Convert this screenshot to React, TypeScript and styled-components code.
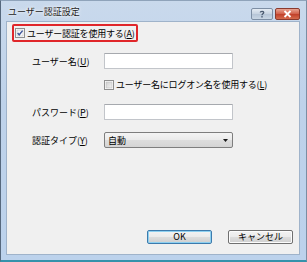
import React from 'react';
import styled, {createGlobalStyle} from "styled-components";

const GlobalStyle = createGlobalStyle`
    html, body {
      margin: 0;
      padding: 0;
      background: #ffffff;
    }
    body {
      font-family: "Noto Sans CJK JP", "Noto Sans", sans-serif;
      font-size: 9px;
      color: #000;
    }
    svg {
      flex-shrink: 0;
    }
`;

const Window = styled.div`
    width: 307px;
    height: 262px;
    box-sizing: border-box;
    display: flex;
    flex-direction: column;
    background: linear-gradient(180deg, #c9d9ec 0%, #bed2ea 40%, #bcd2ec 100%);
    border-left: 1px solid #56687d;
    border-right: 1px solid #7b8ea3;
    border-top: 1px solid #8fa3ba;
    border-bottom: 2px solid #3592ab;
    padding: 0 6px 5px 5px;
`;

const TitleBar = styled.div`
    height: 20px;
    display: flex;
    align-items: flex-start;
    justify-content: space-between;
`;

const Title = styled.div`
    padding: 5px 0 0 2px;
    font-size: 9px;
    line-height: 12px;
    color: #1a1a1a;
    text-shadow: 0 0 4px #ffffff, 0 0 2px #ffffff;
`;

const Caption = styled.div`
    display: flex;
    gap: 2px;
    margin-top: 7px;
`;

const CaptionButton = styled.div<{ $close?: boolean }>`
    width: ${p => (p.$close ? 25 : 22)}px;
    height: 12px;
    box-sizing: border-box;
    border: 1px solid ${p => (p.$close ? "#8a3a2e" : "#7d8ea4")};
    border-radius: 2px;
    display: flex;
    align-items: center;
    justify-content: center;
    background: ${p => (p.$close
        ? "linear-gradient(180deg, #e8a492 0%, #d2604a 48%, #c0402a 52%, #d56a4c 100%)"
        : "linear-gradient(180deg, #e4ebf3 0%, #c7d3e1 48%, #b6c5d7 52%, #c9d6e4 100%)")};
`;

const Client = styled.div`
    flex: 1;
    display: flex;
    flex-direction: column;
    background: #f0f0f0;
    border: 1px solid #9fb3ca;
    padding: 2px 6px 10px 5px;
`;

const Highlight = styled.div`
    width: 126px;
    height: 18px;
    box-sizing: border-box;
    border: 2px solid #e0262a;
    border-radius: 2px;
    display: flex;
    align-items: center;
    gap: 2px;
    padding-left: 1px;
    white-space: nowrap;
    letter-spacing: -0.2px;
`;

const Form = styled.div`
    display: grid;
    grid-template-columns: 72px 129px;
    margin: 11px 0 0 20px;
`;

const Label = styled.div<{ $top: number }>`
    margin-top: ${p => p.$top}px;
    height: 16px;
    display: flex;
    align-items: center;
    white-space: nowrap;
`;

const Field = styled.div<{ $top: number }>`
    margin-top: ${p => p.$top}px;
    height: 16px;
    box-sizing: border-box;
    background: #ffffff;
    border: 1px solid #c2c5ca;
    border-top-color: #a6a9ae;
    border-radius: 1px;
`;

const CheckRow = styled.div<{ $top: number }>`
    grid-column: 2 / span 1;
    margin-top: ${p => p.$top}px;
    height: 11px;
    display: flex;
    align-items: center;
    gap: 2px;
    white-space: nowrap;
    letter-spacing: -0.2px;
`;

const Select = styled.div<{ $top: number }>`
    margin-top: ${p => p.$top}px;
    height: 16px;
    box-sizing: border-box;
    border: 1px solid #7e7e7e;
    border-radius: 2px;
    background: linear-gradient(180deg, #f4f4f4 0%, #ebebeb 48%, #dddddd 52%, #d4d4d4 100%);
    display: flex;
    align-items: center;
    justify-content: space-between;
    padding: 0 4px 0 3px;
`;

const Footer = styled.div`
    margin-top: auto;
    display: flex;
    justify-content: flex-end;
    gap: 16px;
`;

const Button = styled.div<{ $default?: boolean }>`
    width: 65px;
    height: 14px;
    box-sizing: border-box;
    border: 1px solid ${p => (p.$default ? "#3d7bad" : "#707070")};
    border-radius: 2px;
    background: linear-gradient(180deg, #f3f3f3 0%, #ebebeb 48%, #dddddd 52%, #cfcfcf 100%);
    box-shadow: ${p => (p.$default ? "inset 0 0 0 1px #8ed0f0" : "inset 0 0 0 1px #fcfcfc")};
    display: flex;
    align-items: center;
    justify-content: center;
    line-height: 12px;
`;

function CheckBox({checked}: { checked?: boolean }) {
    const id = checked ? "cbOn" : "cbOff";
    return (
        <svg width="10" height="10" viewBox="0 0 10 10">
            <defs>
                <linearGradient id={id} x1="0" y1="0" x2="1" y2="1">
                    <stop offset="0" stopColor={checked ? "#f4f4f4" : "#cfcfcf"}/>
                    <stop offset="1" stopColor={checked ? "#ffffff" : "#f2f2f2"}/>
                </linearGradient>
            </defs>
            <rect x="0.5" y="0.5" width="9" height="9" fill="#ffffff" stroke="#8f8f8f"/>
            <rect x="2" y="2" width="6" height="6" fill={`url(#${id})`} stroke="#bcbcbc" strokeWidth="0.6"/>
            {checked && <path d="M2.6 5 L4.2 6.8 L7.6 2.6" fill="none" stroke="#3f569a" strokeWidth="1.4"/>}
        </svg>
    );
}

function App() {
    return (
        <>
            <GlobalStyle/>
            <Window>
                <TitleBar>
                    <Title>ユーザー認証設定</Title>
                    <Caption>
                        <CaptionButton>
                            <svg width="8" height="8" viewBox="0 0 8 8">
                                <path d="M2.3 2.6 C2.3 0.9 5.7 0.9 5.7 2.6 C5.7 3.8 4 3.9 4 5.2" fill="none" stroke="#4a5a70" strokeWidth="1.3"/>
                                <rect x="3.3" y="6.1" width="1.4" height="1.4" fill="#4a5a70"/>
                            </svg>
                        </CaptionButton>
                        <CaptionButton $close>
                            <svg width="9" height="8" viewBox="0 0 9 8">
                                <path d="M1.5 1 L7.5 7 M7.5 1 L1.5 7" stroke="#ffffff" strokeWidth="1.8"/>
                            </svg>
                        </CaptionButton>
                    </Caption>
                </TitleBar>
                <Client>
                    <Highlight>
                        <CheckBox checked/>
                        <span>ユーザー認証を使用する(<u>A</u>)</span>
                    </Highlight>
                    <Form>
                        <Label $top={0}>ユーザー名(<u>U</u>)</Label>
                        <Field $top={0}/>
                        <CheckRow $top={10}>
                            <CheckBox/>
                            <span>ユーザー名にログオン名を使用する(<u>L</u>)</span>
                        </CheckRow>
                        <Label $top={14}>パスワード(<u>P</u>)</Label>
                        <Field $top={14}/>
                        <Label $top={12}>認証タイプ(<u>Y</u>)</Label>
                        <Select $top={12}>
                            <span>自動</span>
                            <svg width="5" height="3" viewBox="0 0 5 3">
                                <path d="M0 0 H5 L2.5 3 Z" fill="#1a1a1a"/>
                            </svg>
                        </Select>
                    </Form>
                    <Footer>
                        <Button $default>OK</Button>
                        <Button>キャンセル</Button>
                    </Footer>
                </Client>
            </Window>
        </>
    );
}

export default App;
